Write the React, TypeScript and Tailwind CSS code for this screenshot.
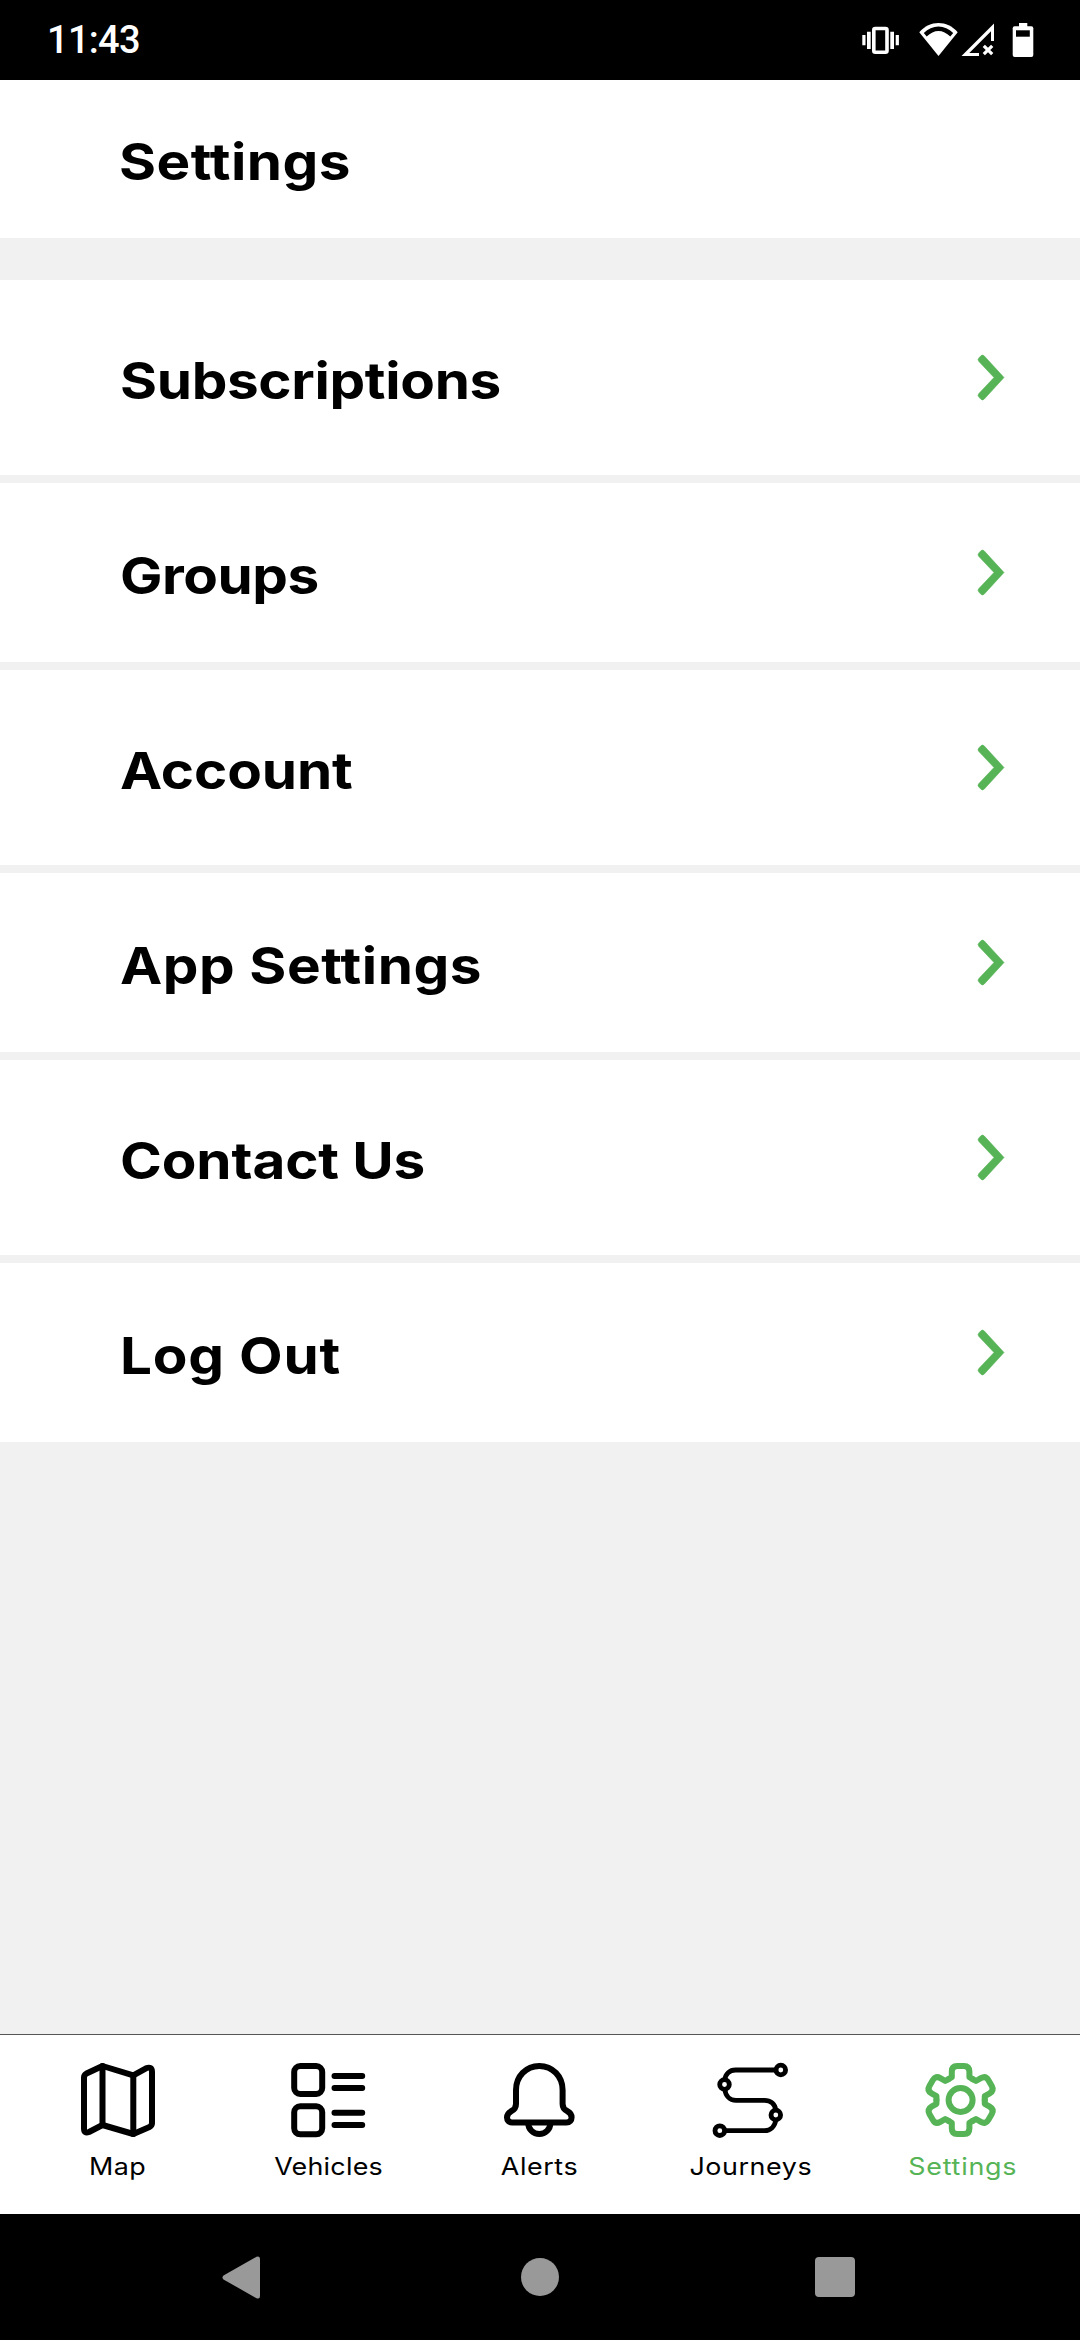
import type { ReactNode } from "react";
import clsx from "clsx";

interface SettingsItem {
  label: string;
  height: string;
  tracking: string;
}

interface TabItem {
  label: string;
  icon: ReactNode;
  tracking: string;
  active?: boolean;
}

const items: SettingsItem[] = [
  { label: "Subscriptions", height: "h-[195px]", tracking: "tracking-[-0.3px]" },
  { label: "Groups", height: "h-[179px]", tracking: "tracking-[-0.4px]" },
  { label: "Account", height: "h-[195px]", tracking: "tracking-[-0.1px]" },
  { label: "App Settings", height: "h-[179px]", tracking: "tracking-[0.5px]" },
  { label: "Contact Us", height: "h-[195px]", tracking: "tracking-[-0.1px]" },
  { label: "Log Out", height: "h-[179px]", tracking: "tracking-[0.7px]" },
];

function TabIcon({ children, strokeWidth = 6 }: { children: ReactNode; strokeWidth?: number }) {
  return (
    <svg
      viewBox="0 0 74 74"
      className="size-[74px] overflow-visible"
      fill="none"
      stroke="currentColor"
      strokeWidth={strokeWidth}
      strokeLinecap="round"
      strokeLinejoin="round"
    >
      {children}
    </svg>
  );
}

const tabs: TabItem[] = [
  {
    label: "Map",
    tracking: "tracking-[0.4px]",
    icon: (
      <TabIcon>
        <path d="M21.5 3 52.3 12.3 65 5.3Q71 3 71 9V60Q71 62.5 68.5 64L52.3 71 21.5 62 8 69Q3 71 3 65.5V14.5Q3 12 5.5 10.5Z" />
        <path d="M21.5 3V62M52.3 12.3V71" />
      </TabIcon>
    ),
  },
  {
    label: "Vehicles",
    tracking: "tracking-[0.2px]",
    icon: (
      <TabIcon>
        <rect x="2.2" y="3" width="28" height="28" rx="6" />
        <rect x="2.2" y="43.3" width="28" height="28" rx="6" />
        <path d="M42.5 13H70.2M42.5 25H70.2M42.5 49.7H70.2M42.5 62H70.2" />
      </TabIcon>
    ),
  },
  {
    label: "Alerts",
    tracking: "tracking-[0.5px]",
    icon: (
      <TabIcon>
        <path d="M36.3 3C23 3 13 13.5 13 27V41C13 44.5 11.5 46.5 8.5 48 5.5 49.5 4 51.5 4 54.5 4 57.5 6 59.5 9 59.5H63.6C66.6 59.5 68.6 57.5 68.6 54.5 68.6 51.5 67.1 49.5 64.1 48 61.1 46.5 59.6 44.5 59.6 41V27C59.6 13.5 49.6 3 36.3 3Z" />
        <path d="M25.3 60.5a11 10.5 0 0 0 22 0" />
      </TabIcon>
    ),
  },
  {
    label: "Journeys",
    tracking: "tracking-[0.5px]",
    icon: (
      <TabIcon strokeWidth={4.8}>
        <path
          strokeLinecap="butt"
          d="M62 7H21.5C15.5 7 11.5 11 10.8 16.8M10.8 26.2C11.5 32.5 15.5 37.3 22 37.3H50.5C56.5 37.3 61 41 61.8 47.2M61.8 56.8C61 63.5 56.5 67.7 50.5 67.7H10.5"
        />
        <circle cx="66.8" cy="7" r="4.8" />
        <circle cx="10.5" cy="21.5" r="4.8" />
        <circle cx="61.8" cy="52" r="4.8" />
        <circle cx="5.8" cy="67.7" r="4.8" />
      </TabIcon>
    ),
  },
  {
    label: "Settings",
    tracking: "tracking-[0.7px]",
    active: true,
    icon: (
      <TabIcon>
        <g transform="translate(35.6 37)">
          {[0, 60, 120, 180, 240, 300].map((angle) => (
            <path
              key={angle}
              transform={`rotate(${angle})`}
              d="M-12.1 -20.9 -8.8 -22.8V-28.5Q-8.8 -34 -3.5 -34H3.5Q8.8 -34 8.8 -28.5V-22.8L12.1 -20.9"
            />
          ))}
          <circle r="12" />
        </g>
      </TabIcon>
    ),
  },
];

function StatusBar() {
  return (
    <div className="flex h-20 items-center justify-between bg-black pl-[47px] pr-[46px] text-white">
      <span className="font-[Roboto,sans-serif] text-[38px] leading-none font-medium tracking-[-0.7px]">11:43</span>
      <div className="flex items-center">
        {/* Vibrate */}
        <svg viewBox="0 0 38 36" className="mr-[19px] h-9 w-[38px]" fill="currentColor">
          <path d="M.3 13h3.2v10.3H.3zM5 9.7h3.7V27H5zM28.3 9.7H32V27h-3.7zM33.7 13h3.2v10.3h-3.2z" />
          <rect x="11.8" y="6.5" width="13.2" height="23.7" rx="1.5" fill="none" stroke="currentColor" strokeWidth="3.6" />
        </svg>
        {/* Wifi */}
        <svg viewBox="0 0 39 36" className="mr-[3px] h-9 w-[39px]" fill="currentColor">
          <path d="M.3 10.3C11-2 28-2 38.7 10.3L19.5 34Z" />
          <path d="M4.8 11C13 2.3 26 2.3 34.2 11L31.3 14.5C24 7 15 7 7.7 14.5Z" fill="#000" />
        </svg>
        {/* Signal */}
        <svg viewBox="0 0 34 36" className="mr-[17px] h-9 w-[34px]" fill="currentColor">
          <path d="M.5 34 33 1.5V19H30V9.2L8.3 31H18V34Z" />
          <path d="M22.8 23.8 31.2 32.2M31.2 23.8 22.8 32.2" stroke="currentColor" strokeWidth="3.2" />
        </svg>
        {/* Battery */}
        <svg viewBox="0 0 22 36" className="h-9 w-[22px]" fill="currentColor">
          <path d="M7 1h8.3v4H7z" />
          <rect x=".7" y="4.3" width="20.6" height="30.7" rx="2" />
          <path d="M4 8.3h13.8v6.4H4z" fill="#000" />
        </svg>
      </div>
    </div>
  );
}

function SettingsRow({ label, height, tracking }: SettingsItem) {
  return (
    <button className={clsx("flex w-full items-center justify-between bg-white pl-[120px] pr-[76px]", height)}>
      <span className={clsx("origin-left scale-x-111 pt-1.5 text-[51px] leading-[60px] font-bold", tracking)}>
        {label}
      </span>
      <svg
        viewBox="0 0 26 45"
        className="h-[45px] w-[26px] overflow-visible text-[#56b456]"
        fill="currentColor"
        stroke="currentColor"
        strokeWidth="0.6"
      >
        <path d="M26 22.5 6.3 1Q4.5-.8 2.7 1L.9 2.9Q-.9 4.7.9 6.5L16 22.5.9 38.5Q-.9 40.3.9 42.1L2.7 44Q4.5 45.8 6.3 44Z" />
      </svg>
    </button>
  );
}

function TabBar() {
  return (
    <nav className="flex h-[180px] border-t border-[#555] bg-white px-3 pt-7">
      {tabs.map(({ label, icon, tracking, active }) => (
        <div key={label} className={clsx("flex flex-1 flex-col items-center", active && "text-[#56b456]")}>
          {icon}
          <span className={clsx("mt-[15px] scale-x-112 text-[24px] leading-[30px]", tracking)}>{label}</span>
        </div>
      ))}
    </nav>
  );
}

function SystemNav() {
  return (
    <div className="flex h-[126px] items-center justify-between bg-black pl-[222px] pr-[225px] text-[#999]">
      <svg viewBox="0 0 43 43" className="size-[43px]" fill="currentColor">
        <path d="M1.5 19.5 34.5.8Q38-.5 38 3V40Q38 43.5 34.5 42.2L1.5 23.5Q-.5 21.5 1.5 19.5Z" />
      </svg>
      <div className="size-[38px] rounded-full bg-[#999]" />
      <div className="size-10 rounded-[4px] bg-[#999]" />
    </div>
  );
}

export default function App() {
  return (
    <div className="flex h-[2340px] w-[1080px] flex-col bg-[#f1f1f1] font-[Inter,sans-serif] text-black">
      <StatusBar />

      {/* Header */}
      <header className="flex h-[158px] items-center bg-white pl-[119px]">
        <h1 className="origin-left scale-x-111 pt-[5px] text-[51px] leading-[60px] font-bold tracking-[0.4px]">
          Settings
        </h1>
      </header>

      {/* Menu */}
      <main className="mt-[42px] flex flex-1 flex-col gap-2">
        {items.map((item) => (
          <SettingsRow key={item.label} {...item} />
        ))}
      </main>

      <TabBar />
      <SystemNav />
    </div>
  );
}
